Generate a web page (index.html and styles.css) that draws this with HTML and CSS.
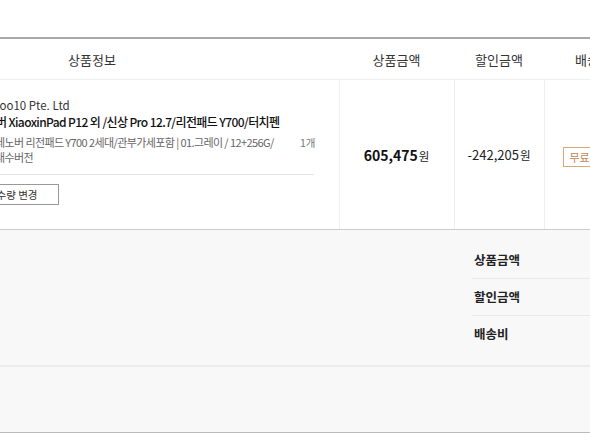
FILE: index.html
```html
<!DOCTYPE html>
<html>
<head>
    <title>장바구니</title>
<link rel="stylesheet" href="styles.css">
</head>
<body>
    <div class="cart">
        <table class="cart-table">
            <colgroup>
                <col class="col-info">
                <col class="col-price">
                <col class="col-sale">
                <col class="col-ship">
            </colgroup>
            <thead>
                <tr>
                    <th>상품정보</th>
                    <th>상품금액</th>
                    <th>할인금액</th>
                    <th>배송비</th>
                </tr>
            </thead>
            <tbody>
                <tr>
                    <td class="info">
                        <div class="info-box">
                            <div class="info-text">
                                <p class="seller">Qoo10 Pte. Ltd</p>
                                <p class="title">레노버 XiaoxinPad P12 외 /신상 Pro 12.7/리전패드 Y700/터치펜</p>
                                <div class="option-row">
                                    <p class="option">레노버 리전패드 Y700 2세대/관부가세포함 | 01.그레이 / 12+256G/<br>내수버전</p>
                                    <span class="qty">1개</span>
                                </div>
                                <button class="btn-change">수량 변경</button>
                            </div>
                        </div>
                    </td>
                    <td class="amount"><b>605,475</b><span class="won">원</span></td>
                    <td class="amount sale">-242,205<span class="won">원</span></td>
                    <td class="ship"><span class="badge">무료배송</span></td>
                </tr>
            </tbody>
        </table>

        <div class="summary">
            <ul class="summary-list">
                <li>상품금액</li>
                <li>할인금액</li>
                <li>배송비</li>
            </ul>
        </div>
        <div class="summary-total"></div>
    </div>
</body>
</html>
```

FILE: styles.css
```css
body {
  margin: 0;
  font-family: "Noto Sans CJK KR", "Noto Sans", sans-serif;
  color: #222;
  background: #fff;
  overflow: hidden;
}

p {
  margin: 0;
}

.cart {
  margin-top: 37px;
  margin-left: -155px;
  width: 797px;
}

.cart-table {
  width: 797px;
  border-collapse: collapse;
  table-layout: fixed;
  border-top: 2px solid #a9a9a9;
}

.col-info { width: 494px; }
.col-price { width: 115px; }
.col-sale { width: 90px; }
.col-ship { width: 98px; }

th {
  height: 40px;
  padding: 0;
  font-size: 13px;
  font-weight: 400;
  color: #333;
  border-bottom: 1px solid #eee;
}

td {
  height: 149px;
  padding: 0;
  text-align: center;
  border-left: 1px solid #eee;
  border-bottom: 1px solid #ccc;
}

td.info {
  border-left: none;
  text-align: left;
}

.info-box {
  padding-left: 132px;
  padding-right: 25px;
  padding-bottom: 8px;
}

.seller {
  font-size: 11.5px;
  color: #333;
  line-height: 16px;
  margin-left: 14px;
}

.title {
  font-size: 12px;
  font-weight: 500;
  color: #111;
  line-height: 18px;
  letter-spacing: -0.6px;
  margin-left: -2px;
  white-space: nowrap;
}

.option-row {
  display: flex;
  align-items: flex-start;
  justify-content: space-between;
  padding-top: 4px;
  padding-bottom: 9px;
  border-bottom: 1px solid #e5e5e5;
}

.option {
  margin-left: 18px;
  font-size: 11px;
  line-height: 15px;
  letter-spacing: -0.6px;
  white-space: nowrap;
  color: #666;
}

.qty {
  font-size: 10.5px;
  color: #777;
  line-height: 15px;
  margin-right: -2px;
}

.btn-change {
  margin-top: 9px;
  margin-left: -2px;
  height: 21px;
  width: 84px;
  padding: 0;
  font-family: inherit;
  font-size: 10.5px;
  color: #333;
  background: #fff;
  border: 1px solid #999;
  cursor: pointer;
}

.amount {
  font-size: 13px;
  color: #222;
}

.amount b {
  font-size: 14px;
  font-weight: 700;
  color: #111;
}

.won {
  font-size: 11.5px;
  margin-left: 1px;
}

.ship {
  text-align: left;
  padding-left: 18px;
}

.badge {
  display: inline-block;
  padding: 1px 6px;
  font-size: 11px;
  color: #c0864f;
  border: 1px solid #d9a679;
  margin-top: -6px;
}

.summary {
  background: #f8f8f8;
  padding: 12px 0 13px 627px;
  border-bottom: 2px solid #ececec;
}

.summary-list {
  list-style: none;
  margin: 0;
  padding: 0;
}

.summary-list li {
  height: 36px;
  line-height: 36px;
  padding-left: 2px;
  font-size: 12.5px;
  font-weight: 700;
  color: #222;
  border-bottom: 1px solid #e9e9e9;
}

.summary-list li:last-child {
  border-bottom: none;
}

.summary-total {
  height: 65px;
  background: #f8f8f8;
  border-bottom: 1px solid #b9b9b9;
}
```
